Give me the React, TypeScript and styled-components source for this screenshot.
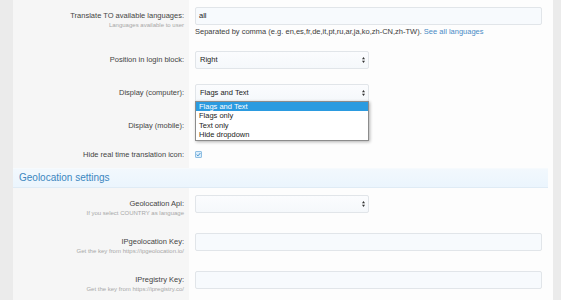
import React from "react";
import styled, { createGlobalStyle } from "styled-components";

const Global = createGlobalStyle`
  html, body { margin: 0; padding: 0; background: #fff; }
  body { font-family: "Liberation Sans", Arial, sans-serif; }
`;

const Page = styled.div`
  display: flex;
  width: 561px;
  height: 300px;
  overflow: hidden;
`;

const Strip = styled.div<{ $w: number }>`
  flex: 0 0 ${(p) => p.$w}px;
  background: #ebebeb;
`;

const Main = styled.div`
  flex: 1;
  background: #fdfdfd;
  display: flex;
  flex-direction: column;
`;

const Row = styled.div`
  display: grid;
  grid-template-columns: 176px 1fr;
`;

const LabelCell = styled.div`
  background: #f6f6f6;
  padding: 7px 5px 8px 0;
  text-align: right;
`;

const ControlCell = styled.div`
  padding: 7px 11px 8px 6px;
  position: relative;
`;

const Label = styled.div<{ $flush?: boolean }>`
  font-size: 7.5px;
  line-height: 10px;
  color: #444;
  padding-top: ${(p) => (p.$flush ? 0 : 4)}px;
  margin-top: ${(p) => (p.$flush ? -0.5 : 0)}px;
  white-space: nowrap;
`;

const Hint = styled.div`
  font-size: 6px;
  line-height: 9px;
  color: #a8a8a8;
  white-space: nowrap;
`;

const TextBox = styled.div`
  box-sizing: border-box;
  height: 18px;
  width: 100%;
  border: 1px solid #e1e5e9;
  border-radius: 2px;
  background: #f7fafd;
  font-size: 7.5px;
  line-height: 16px;
  color: #222;
  padding-left: 3px;
`;

const SelectWrap = styled.div`
  position: relative;
  width: 174px;
`;

const SelectBox = styled.div`
  box-sizing: border-box;
  height: 18px;
  width: 100%;
  border: 1px solid #e1e5e9;
  border-radius: 2px;
  background: linear-gradient(#fbfcfe, #f5f8fb);
  font-size: 7.5px;
  line-height: 16px;
  color: #222;
  padding-left: 4px;
  display: flex;
  justify-content: space-between;
  align-items: center;
  padding-right: 3px;
`;

const Explain = styled.div`
  margin-top: 2px;
  font-size: 7.5px;
  line-height: 9px;
  color: #3c3c3c;
  white-space: nowrap;
`;

const Link = styled.span`
  color: #4a8cc6;
`;

const Header = styled.div`
  height: 20px;
  margin-right: 5px;
  box-sizing: border-box;
  background: linear-gradient(#f2f8fd, #ebf5fd);
  border-bottom: 1px solid #dfebf5;
  border-top: 1px solid #f6fafd;
  font-size: 10px;
  line-height: 18px;
  color: #3b86bf;
  padding-left: 6px;
`;

const Check = styled.div`
  margin-top: 1px;
  width: 7px;
  height: 7px;
  box-sizing: border-box;
  border: 1px solid #8fbfe3;
  background: #dcedfa;
  border-radius: 1px;
  display: flex;
  align-items: center;
  justify-content: center;
`;

const Popup = styled.div`
  position: absolute;
  top: 100%;
  left: 0;
  right: 0;
  margin-top: -1px;
  background: #fff;
  border: 1px solid #8c8c8c;
  box-shadow: 1px 1px 3px rgba(0, 0, 0, 0.3);
  z-index: 2;
`;

const Option = styled.div<{ $active?: boolean }>`
  height: 9.4px;
  line-height: 9.4px;
  font-size: 7.5px;
  padding-left: 3px;
  color: ${(p) => (p.$active ? "#fff" : "#222")};
  background: ${(p) => (p.$active ? "#2b9be0" : "transparent")};
  white-space: nowrap;
`;

const Arrows = () => (
  <svg width="3" height="6" viewBox="0 0 3 6">
    <path d="M1.5 0 L3 2.3 L0 2.3 Z" fill="#333" />
    <path d="M1.5 6 L3 3.7 L0 3.7 Z" fill="#333" />
  </svg>
);

const Select = ({ value, children }: { value: string; children?: React.ReactNode }) => (
  <SelectWrap>
    <SelectBox>
      <span>{value}</span>
      <Arrows />
    </SelectBox>
    {children}
  </SelectWrap>
);

export default function App() {
  return (
    <>
      <Global />
      <Page>
        <Strip $w={13} />
        <Main>
          <Row>
            <LabelCell>
              <Label>Translate TO available languages:</Label>
              <Hint>Languages available to user</Hint>
            </LabelCell>
            <ControlCell>
              <TextBox>all</TextBox>
              <Explain>
                Separated by comma (e.g. en,es,fr,de,it,pt,ru,ar,ja,ko,zh-CN,zh-TW).{" "}
                <Link>See all languages</Link>
              </Explain>
            </ControlCell>
          </Row>
          <Row>
            <LabelCell>
              <Label>Position in login block:</Label>
            </LabelCell>
            <ControlCell>
              <Select value="Right" />
            </ControlCell>
          </Row>
          <Row>
            <LabelCell>
              <Label>Display (computer):</Label>
            </LabelCell>
            <ControlCell>
              <Select value="Flags and Text">
                <Popup>
                  <Option $active>Flags and Text</Option>
                  <Option>Flags only</Option>
                  <Option>Text only</Option>
                  <Option>Hide dropdown</Option>
                </Popup>
              </Select>
            </ControlCell>
          </Row>
          <Row>
            <LabelCell>
              <Label>Display (mobile):</Label>
            </LabelCell>
            <ControlCell>
              <Select value="" />
            </ControlCell>
          </Row>
          <Row>
            <LabelCell>
              <Label $flush>Hide real time translation icon:</Label>
            </LabelCell>
            <ControlCell>
              <Check>
                <svg width="5" height="5" viewBox="0 0 5 5">
                  <path d="M0.6 2.6 L2 3.9 L4.4 1" stroke="#3d8fcc" strokeWidth="0.9" fill="none" />
                </svg>
              </Check>
            </ControlCell>
          </Row>
          <Header>Geolocation settings</Header>
          <Row>
            <LabelCell>
              <Label>Geolocation Api:</Label>
              <Hint>If you select COUNTRY as language</Hint>
            </LabelCell>
            <ControlCell>
              <Select value="" />
            </ControlCell>
          </Row>
          <Row>
            <LabelCell>
              <Label>IPgeolocation Key:</Label>
              <Hint>Get the key from https://ipgeolocation.io/</Hint>
            </LabelCell>
            <ControlCell>
              <TextBox />
            </ControlCell>
          </Row>
          <Row>
            <LabelCell>
              <Label>IPregistry Key:</Label>
              <Hint>Get the key from https://ipregistry.co/</Hint>
            </LabelCell>
            <ControlCell>
              <TextBox />
            </ControlCell>
          </Row>
        </Main>
        <Strip $w={8} />
      </Page>
    </>
  );
}
